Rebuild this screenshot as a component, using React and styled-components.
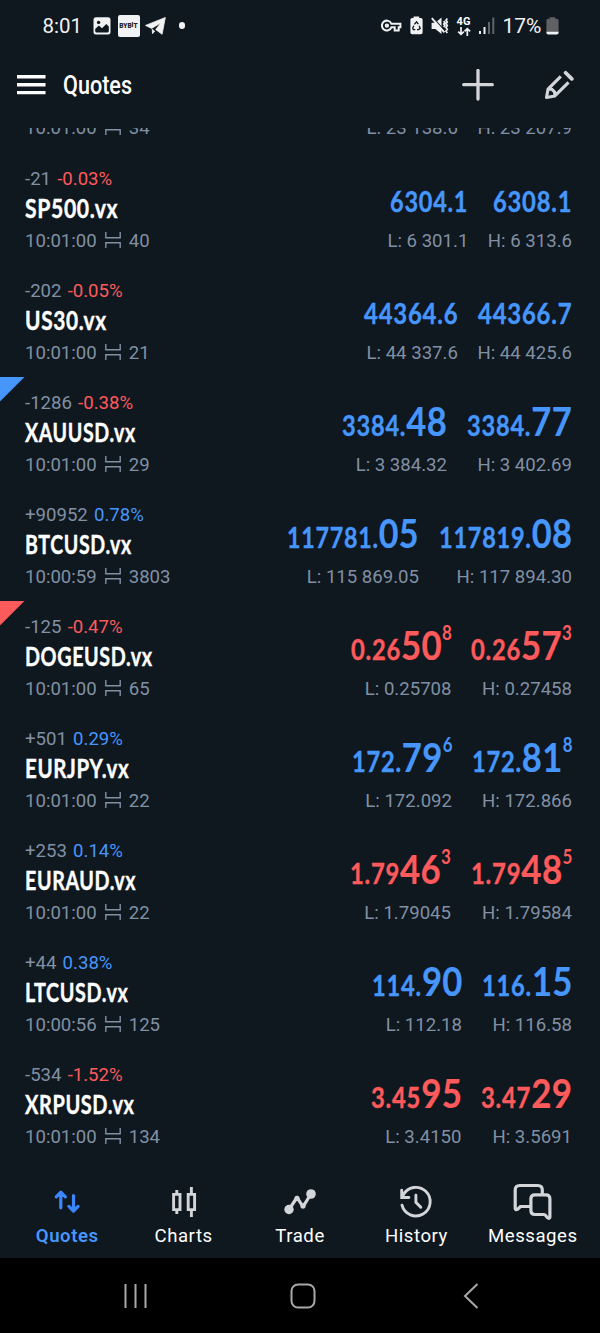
import React, { useLayoutEffect, useRef, useState } from "react";
import styled, { createGlobalStyle } from "styled-components";

const BLUE = "#4696fc";
const RED = "#fd5a5c";
const ICON = "#d3d5d8";

const quotes = [
  { name: "SP500.vx", nameWidth: 93.5, points: "-21", percent: "-0.03%", time: "10:01:00", spread: "40", up: true, bid: ["6304.1", "", "", 78], ask: ["6308.1", "", "", 79], low: "6 301.1", high: "6 313.6" },
  { name: "US30.vx", nameWidth: 82, points: "-202", percent: "-0.05%", time: "10:01:00", spread: "21", up: true, bid: ["44364.6", "", "", 94], ask: ["44366.7", "", "", 94], low: "44 337.6", high: "44 425.6" },
  { name: "XAUUSD.vx", nameWidth: 111, points: "-1286", percent: "-0.38%", time: "10:01:00", spread: "29", up: true, corner: BLUE, bid: ["3384.", "48", "", 105.5], ask: ["3384.", "77", "", 105.5], low: "3 384.32", high: "3 402.69" },
  { name: "BTCUSD.vx", nameWidth: 106.5, points: "+90952", percent: "0.78%", time: "10:00:59", spread: "3803", up: true, bid: ["117781.", "05", "", 132], ask: ["117819.", "08", "", 133.5], low: "115 869.05", high: "117 894.30" },
  { name: "DOGEUSD.vx", nameWidth: 127.5, points: "-125", percent: "-0.47%", time: "10:01:00", spread: "65", up: false, corner: RED, bid: ["0.26", "50", "8", 101], ask: ["0.26", "57", "3", 101], low: "0.25708", high: "0.27458" },
  { name: "EURJPY.vx", nameWidth: 104.5, points: "+501", percent: "0.29%", time: "10:01:00", spread: "22", up: true, bid: ["172.", "79", "6", 100.5], ask: ["172.", "81", "8", 100.5], low: "172.092", high: "172.866" },
  { name: "EURAUD.vx", nameWidth: 111.5, points: "+253", percent: "0.14%", time: "10:01:00", spread: "22", up: false, bid: ["1.79", "46", "3", 101], ask: ["1.79", "48", "5", 101.5], low: "1.79045", high: "1.79584" },
  { name: "LTCUSD.vx", nameWidth: 103, points: "+44", percent: "0.38%", time: "10:00:56", spread: "125", up: true, bid: ["114.", "90", "", 90.5], ask: ["116.", "15", "", 90.5], low: "112.18", high: "116.58" },
  { name: "XRPUSD.vx", nameWidth: 110, points: "-534", percent: "-1.52%", time: "10:01:00", spread: "134", up: false, bid: ["3.45", "95", "", 91], ask: ["3.47", "29", "", 91], low: "3.4150", high: "3.5691" },
];

// squeezes its text horizontally to the given width
function Condensed({ width, children }) {
  const ref = useRef(null);
  const [scale, setScale] = useState(1);

  useLayoutEffect(() => {
    setScale(width / ref.current.offsetWidth);
  }, [width]);

  return (
    <Squeeze style={{ width }}>
      <span ref={ref} style={{ transform: `scaleX(${scale})` }}>
        {children}
      </span>
    </Squeeze>
  );
}

function SpreadIcon() {
  return (
    <svg width="16" height="16" viewBox="0 0 16 16" fill="none" stroke="currentColor" strokeWidth="1.4">
      <path d="M.8 0v5.8h14.400V0M.8 16v-5.200h14.400V16" />
    </svg>
  );
}

function Price({ value, up }) {
  const [main, big, sup, width] = value;
  return (
    <PriceText $up={up}>
      <Condensed width={width}>
        {main}
        {big && <b>{big}</b>}
        {sup && <sup>{sup}</sup>}
      </Condensed>
    </PriceText>
  );
}

function TimeLine({ time, spread }) {
  return (
    <Meta>
      <span>{time}</span>
      <SpreadIcon />
      <span>{spread}</span>
    </Meta>
  );
}

function QuoteRow({ quote }) {
  return (
    <Row>
      {quote.corner && <Corner $color={quote.corner} />}
      <div>
        <Change $down={quote.percent.startsWith("-")}>
          {quote.points} <span>{quote.percent}</span>
        </Change>
        <Name>
          <Condensed width={quote.nameWidth}>{quote.name}</Condensed>
        </Name>
        <TimeLine time={quote.time} spread={quote.spread} />
      </div>
      <Prices>
        <Side>
          <Price value={quote.bid} up={quote.up} />
          <Meta>L: {quote.low}</Meta>
        </Side>
        <Side>
          <Price value={quote.ask} up={quote.up} />
          <Meta>H: {quote.high}</Meta>
        </Side>
      </Prices>
    </Row>
  );
}

function StatusLeft() {
  return (
    <StatusGroup>
      <Clock>8:01</Clock>
      <svg width="18" height="18" viewBox="0 0 18 18">
        <rect x=".5" y=".2" width="17" height="17.4" rx="2.5" fill="#f1f2f3" />
        <path d="M2.2 14V12l3.600-3.500 3.200 2.800 4.300-4.300 2.500 2.600V14q0 1.600-1.600 1.600H3.800Q2.200 15.600 2.200 14z" fill="#0f171f" />
        <circle cx="5.6" cy="5.4" r="1.7" fill="#0f171f" />
      </svg>
      <Bybit>BYB<i>I</i>T</Bybit>
      <svg width="21" height="18" viewBox="0 0 21 18" fill="#f1f2f3" stroke="#f1f2f3" strokeWidth=".8" strokeLinejoin="round">
        <path d="M.5 8.400 20.300.5l-3.200 16.800-6.400-4.700L16 5.800l-9.400 5.600zM7.200 12.300l2.500 2-2.200 2.400z" />
      </svg>
      <Dot />
    </StatusGroup>
  );
}

function StatusRight() {
  return (
    <StatusGroup>
      <svg width="21" height="14" viewBox="0 0 21 14" fill="none" stroke="#f1f2f3" strokeWidth="2">
        <path d="M10.400 4.800H19.400v3.500h-1.700v3.200h-4V8.300h-3.300A4.900 4.900 0 1 1 10.400 4.800z" />
        <circle cx="5.900" cy="6.600" r="1.200" />
      </svg>
      <svg width="13" height="19" viewBox="0 0 13 19">
        <path d="M3.600 2V.5h5.600V2h1.600q1.800 0 1.800 1.800v12.700q0 1.800-1.800 1.800H2.200Q.4 18.300.4 16.500V3.800Q.4 2 2.200 2z" fill="#f1f2f3" />
        <path d="M4.400 8.400 6.500 5.800l1.800 2.400M9.200 9.800l1 2.600-1.700 1.200H7M5.300 13.600H3.400l-.7-1.400 1.100-2.400" fill="none" stroke="#0f171f" strokeWidth="1.300" />
      </svg>
      <svg width="18" height="18" viewBox="0 0 18 18" fill="#f1f2f3">
        <path d="M.6 5.700h3.800L10.500.5v16.500l-6.100-5.100H.6z" />
        <path d="m2.200 1 12.500 14" stroke="#0f171f" strokeWidth="1.300" />
        <path d="m.8 1.200 12.600 14.200" stroke="#f1f2f3" strokeWidth="1.900" />
        <path d="m12.700 4 1.200 1.400-1.200 1.600 1.200 1.600-1.200 1.500M16.300 1.500 15 3.200 16.300 5 15 6.800l1.300 1.800-1.300 1.800 1.300 1.800-1.300 1.800 1.300 2" fill="none" stroke="#f1f2f3" strokeWidth="1.700" />
      </svg>
      <Network>
        4G
        <svg width="14" height="9" viewBox="0 0 14 9" fill="none" stroke="#f1f2f3" strokeWidth="1.700">
          <path d="M4 0v7.500M1.200 4.600 4 7.400l2.800-2.800M10.300 9V1.500M7.500 4.400l2.800-2.800 2.800 2.800" />
        </svg>
      </Network>
      <svg width="16" height="17" viewBox="0 0 16 17">
        <path d="M0 14h2v3H0zM4.500 10h2v7h-2z" fill="#f1f2f3" />
        <path d="M9 5h2v12H9zM13.300.5h2V17h-2z" fill="#5f656c" />
      </svg>
      <Battery>17%</Battery>
      <svg width="13" height="18" viewBox="0 0 13 18">
        <path d="M3.600 1.700V.2h5.600v1.500h1.600q1.800 0 1.800 1.800V14H.4V3.500q0-1.800 1.800-1.800z" fill="#5f6164" />
        <path d="M.4 14.500h12.200v1.300q0 1.600-1.800 1.600H2.200q-1.800 0-1.800-1.600z" fill="#f1f2f3" />
      </svg>
    </StatusGroup>
  );
}

const tabs = [
  {
    label: "Quotes",
    icon: (
      <g stroke="#3b86fb" strokeWidth="3.200" strokeLinecap="round" strokeLinejoin="round">
        <path d="M14.800 25.800V10.500M10.200 14.800l4.600-4.600 4.600 4.600M27.500 13.500v15M22.900 24.400l4.600 4.600 4.600-4.600" />
      </g>
    ),
  },
  {
    label: "Charts",
    icon: (
      <g stroke={ICON} strokeWidth="2.900">
        <path d="M10.600 12.400h6.400v15.200h-6.400zM13.800 8v4M13.800 28v4M25.200 12.400h6.400v15.200h-6.400zM28.400 5v7M28.400 28v7" />
      </g>
    ),
  },
  {
    label: "Trade",
    icon: (
      <g stroke={ICON} strokeWidth="3.200">
        <path d="m10 27.500 8-12 6 9.200 8-12.700" strokeLinejoin="round" />
        <g fill={ICON} stroke="none">
          <circle cx="10" cy="27.500" r="4.700" />
          <circle cx="18" cy="16.300" r="2.600" />
          <circle cx="24" cy="24" r="2.600" />
          <circle cx="32" cy="12" r="4.800" />
        </g>
      </g>
    ),
  },
  {
    label: "History",
    icon: (
      <g stroke={ICON} strokeWidth="2.900" strokeLinecap="round">
        <path d="M7 23.200A14.300 14.300 0 1 0 8.200 13l-1.400 2.400M6.700 8.300v7.200h7.200M20.900 13.300v7l4.900 5" />
      </g>
    ),
  },
  {
    label: "Messages",
    icon: (
      <g stroke={ICON} strokeWidth="3.200" strokeLinejoin="round" strokeLinecap="round">
        <path d="M17.500 24.500H8.500l-3 2.800q-2.300 1-2.300-1V8q0-4.500 4.500-4.500h18.100q4.500 0 4.500 4.500v3.500" />
        <path d="M22.900 12.800h11q4 0 4 4v18.500q-.6 2-2.600.3l-1.500-2q-.7-1.100-2-1.100h-8.900q-4 0-4-4V16.800q0-4 4-4z" />
      </g>
    ),
  },
];

function App() {
  return (
    <Screen>
      <GlobalStyle />
      <StatusBar>
        <StatusLeft />
        <StatusRight />
      </StatusBar>
      <Toolbar>
        <svg width="29" height="20" viewBox="0 0 29 20" fill="#fff">
          <path d="M0 0h28.500v3.400H0zM0 8h28.500v3.400H0zM0 15.900h28.500v3.400H0z" />
        </svg>
        <Title>
          <Condensed width={69}>Quotes</Condensed>
        </Title>
        <svg width="32" height="32" viewBox="0 0 32 32" stroke={ICON} strokeWidth="3.300" strokeLinecap="round">
          <path d="M16 1.500v28.600M1.700 15.700h28.600" />
        </svg>
        <svg width="30" height="30" viewBox="0 0 30 30" fill="none" stroke={ICON} strokeWidth="3.100">
          <path d="M16.800 6.400 4 19.200l-1.500 8.300 8.400-1.600L24.500 12.400M4.300 19.200h3.400l3 3v3.500" strokeLinejoin="round" />
          <path d="m21.600 2.700 6.200 6.200" strokeWidth="3.700" strokeLinecap="round" />
        </svg>
      </Toolbar>
      <List>
        <ScrolledRow>
          <TimeLine time="10:01:00" spread="34" />
          <Prices>
            <Meta>L: 23 138.6</Meta>
            <Meta>H: 23 207.9</Meta>
          </Prices>
        </ScrolledRow>
        {quotes.map((quote) => (
          <QuoteRow key={quote.name} quote={quote} />
        ))}
      </List>
      <TabBar>
        {tabs.map((tab) => (
          <Tab key={tab.label} $active={tab.label === "Quotes"}>
            <svg width="42" height="40" viewBox="0 0 42 40" fill="none">
              {tab.icon}
            </svg>
            {tab.label}
          </Tab>
        ))}
      </TabBar>
      <SystemNav>
        <svg width="24" height="24" viewBox="0 0 24 24" stroke="#a9a9a9" strokeWidth="2">
          <path d="M1.500 0v24M11.500 0v24M21.500 0v24" />
        </svg>
        <HomeButton width="26" height="26" viewBox="0 0 26 26" fill="none" stroke="#a9a9a9" strokeWidth="2">
          <rect x="1.500" y="1.500" width="23" height="23" rx="6.500" />
        </HomeButton>
        <svg width="16" height="26" viewBox="0 0 16 26" fill="none" stroke="#a9a9a9" strokeWidth="2">
          <path d="M14.500 1 2 13l12.500 12" />
        </svg>
      </SystemNav>
    </Screen>
  );
}

const GlobalStyle = createGlobalStyle`
  body {
    margin: 0;
    background: #0f171f;
  }

  svg {
    display: block;
    flex: none;
  }
`;

const Screen = styled.div`
  display: flex;
  flex-direction: column;
  width: 600px;
  height: 1333px;
  overflow: hidden;
  background: #0f171f;
  color: #fff;
  font-family: Roboto, sans-serif;
`;

const Squeeze = styled.span`
  display: inline-block;
  white-space: nowrap;

  > span {
    display: inline-block;
    transform-origin: 0 50%;
  }
`;

const StatusBar = styled.div`
  display: flex;
  justify-content: space-between;
  height: 51px;
  padding: 0 41.5px 0 42.5px;
`;

const StatusGroup = styled.div`
  display: flex;
  align-items: center;
  gap: 8px;
`;

const Clock = styled.span`
  width: 40px;
  font-size: 20.5px;
  color: #f1f2f3;
  margin-right: 2px;
`;

const Bybit = styled.span`
  display: flex;
  align-items: center;
  justify-content: center;
  width: 22px;
  height: 22px;
  margin: 0 -3px 0 -1px;
  border-radius: 2px;
  background: #f1f2f3;
  color: #222;
  font-size: 6.5px;
  font-weight: 900;

  i {
    font-style: normal;
    padding-bottom: 2px;
  }
`;

const Dot = styled.span`
  width: 6.5px;
  height: 6.5px;
  margin-left: 5px;
  border-radius: 50%;
  background: #f1f2f3;
`;

const Network = styled.span`
  display: flex;
  flex-direction: column;
  align-items: center;
  gap: 1px;
  padding-top: 1px;
  font-size: 11px;
  line-height: 9px;
  font-weight: 700;
`;

const Battery = styled.span`
  font-size: 21px;
  color: #f1f2f3;
  margin-right: -4px;
`;

const Toolbar = styled.div`
  display: flex;
  align-items: center;
  box-sizing: border-box;
  height: 76.5px;
  padding: 0 26px 9px 17px;

  svg + svg {
    margin-left: 50px;
  }
`;

const Title = styled.div`
  flex: 1;
  margin-left: 17px;
  font-size: 26px;
  font-weight: 500;
`;

const List = styled.div`
  flex: 1;
  overflow: hidden;
`;

const Meta = styled.div`
  display: flex;
  align-items: center;
  gap: 8px;
  height: 24px;
  font-size: 18.6px;
  line-height: 24px;
  white-space: pre;
  color: #8190a3;

  svg {
    margin-bottom: 2px;
  }
`;

const Prices = styled.div`
  display: flex;
  gap: 19.5px;
`;

const Side = styled.div`
  display: flex;
  flex-direction: column;
  align-items: flex-end;
`;

const ScrolledRow = styled.div`
  display: flex;
  justify-content: space-between;
  height: 36px;
  margin-top: -11.5px;
  padding: 0 28px 0 25px;
`;

const Row = styled.div`
  position: relative;
  display: flex;
  justify-content: space-between;
  height: 112px;
  padding: 14.5px 28px 0 25px;
  box-sizing: border-box;
`;

const Corner = styled.span`
  position: absolute;
  top: 0.5px;
  left: 0;
  width: 25px;
  height: 25px;
  background: ${({ $color }) => $color};
  clip-path: polygon(0 0, 100% 0, 0 100%);
`;

const Change = styled.div`
  height: 24px;
  font-size: 18.6px;
  line-height: 24px;
  color: #8190a3;

  span {
    margin-left: 1.5px;
    color: ${({ $down }) => ($down ? RED : BLUE)};
  }
`;

const Name = styled.div`
  height: 38px;
  font-family: Lato, sans-serif;
  font-size: 26.5px;
  line-height: 34px;
  font-weight: 700;
  letter-spacing: 0.8px;
  -webkit-text-stroke: 0.4px #fff;
`;

const PriceText = styled.div`
  height: 62px;
  font-family: Lato, sans-serif;
  font-size: 28px;
  line-height: 69px;
  font-weight: 700;
  letter-spacing: 0.9px;
  color: ${({ $up }) => ($up ? BLUE : RED)};
  -webkit-text-stroke: 0.4px currentColor;

  b {
    font-size: 41px;
    line-height: 0;
    font-weight: 700;
    letter-spacing: 0.4px;
    -webkit-text-stroke: 0.2px currentColor;
  }

  sup {
    font-size: 20px;
    line-height: 0;
    vertical-align: 20.5px;
    letter-spacing: 0;
    -webkit-text-stroke: 0;
  }
`;

const TabBar = styled.div`
  display: flex;
  height: 98px;
  padding: 0 9px;
`;

const Tab = styled.div`
  flex: 1;
  display: flex;
  flex-direction: column;
  align-items: center;
  padding-top: 22px;
  font-size: 18.6px;
  line-height: 28px;
  letter-spacing: 0.55px;
  font-weight: ${({ $active }) => ($active ? 600 : 400)};
  color: ${({ $active }) => ($active ? BLUE : "#fff")};
`;

const SystemNav = styled.div`
  display: flex;
  align-items: center;
  justify-content: space-between;
  height: 75px;
  padding: 0 121px 0 124px;
  background: #000;
`;

const HomeButton = styled.svg`
  margin-right: 6px;
`;

export default App;
